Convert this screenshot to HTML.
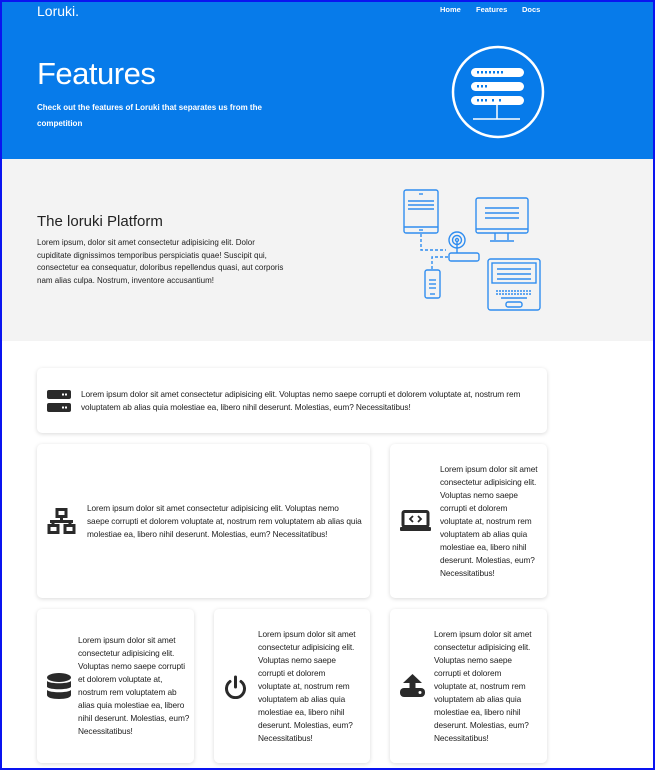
<!DOCTYPE html>
<html><head><meta charset="utf-8"><style>
*{margin:0;padding:0;box-sizing:border-box}
html,body{width:655px;height:770px;overflow:hidden}
body{font-family:"Liberation Sans",sans-serif;background:#fff;position:relative;color:#222}
.frame{position:absolute;inset:0;border:2px solid #0a14f0;pointer-events:none;z-index:10}
.hero{position:absolute;left:0;top:0;width:655px;height:159px;background:#077bea;color:#fff}
.logo{position:absolute;left:37px;top:3px;font-size:14px;font-weight:300}
.nav{position:absolute;top:5px;font-size:7.5px;font-weight:bold}
h1{position:absolute;left:37px;top:56px;font-size:31px;font-weight:300;letter-spacing:-0.5px}
.sub{position:absolute;left:37px;top:100px;font-size:8px;font-weight:bold;line-height:16px;width:252px}
.grey{position:absolute;left:0;top:159px;width:655px;height:182px;background:#f3f3f3}
h2{position:absolute;left:37px;top:213px;font-size:15px;font-weight:300;color:#222}
.ptext{position:absolute;left:37px;top:237px;font-size:8px;line-height:12.5px;width:250px;color:#222}
.card{position:absolute;background:#fff;border-radius:5px;box-shadow:0 1px 4px rgba(0,0,0,.15)}
.t{position:absolute;font-size:8.3px;line-height:13px;color:#222;letter-spacing:-0.1px}
.ic{position:absolute}
</style></head><body>
<div class="hero">
<div class="logo">Loruki.</div>
<div class="nav" style="left:440px">Home</div>
<div class="nav" style="left:476px">Features</div>
<div class="nav" style="left:522px">Docs</div>
<h1>Features</h1>
<div class="sub">Check out the features of Loruki that separates us from the competition</div>
<svg style="position:absolute;left:0;top:0" width="655" height="159" viewBox="0 0 655 159">
<ellipse cx="498" cy="92" rx="45" ry="45" fill="none" stroke="#fff" stroke-width="2.5"/>
<rect x="471" y="68" width="53" height="9" rx="4.5" fill="#fff"/>
<rect x="471" y="82" width="53" height="9" rx="4.5" fill="#fff"/>
<rect x="471" y="96" width="53" height="9" rx="4.5" fill="#fff"/>
<g fill="#077bea">
<rect x="477" y="71" width="2" height="2.5"/><rect x="481" y="71" width="2" height="2.5"/><rect x="485" y="71" width="2" height="2.5"/><rect x="489" y="71" width="2" height="2.5"/><rect x="493" y="71" width="2" height="2.5"/><rect x="497" y="71" width="2" height="2.5"/><rect x="501" y="71" width="2" height="2.5"/>
<rect x="477" y="85" width="2" height="2.5"/><rect x="481" y="85" width="2" height="2.5"/><rect x="485" y="85" width="2" height="2.5"/>
<rect x="477" y="99" width="2" height="2.5"/><rect x="481" y="99" width="2" height="2.5"/><rect x="485" y="99" width="2" height="2.5"/><rect x="492" y="99" width="2" height="2.5"/><rect x="499" y="99" width="2" height="2.5"/>
</g>
<line x1="497" y1="105" x2="497" y2="119" stroke="#fff" stroke-width="1.5"/>
<line x1="473" y1="119" x2="520" y2="119" stroke="#fff" stroke-width="1.5"/>
</svg>
</div>
<div class="grey"></div>
<svg style="position:absolute;left:0;top:0" width="655" height="340" viewBox="0 0 655 340" fill="none" stroke="#2f8df0" stroke-width="1.4">
<rect x="404" y="190" width="34" height="43" rx="2"/><line x1="404" y1="227" x2="438" y2="227"/><line x1="408" y1="201" x2="434" y2="201"/><line x1="408" y1="205" x2="434" y2="205"/><line x1="408" y1="209" x2="434" y2="209"/><line x1="419" y1="230" x2="423" y2="230"/><line x1="419" y1="194" x2="423" y2="194"/>
<path d="M421 234v16h25" stroke-dasharray="3 2"/><path d="M448 257h-16v12" stroke-dasharray="3 2"/>
<circle cx="457" cy="240" r="8"/><circle cx="457" cy="240" r="4.5"/><circle cx="457" cy="240" r="1.5"/><line x1="457" y1="242" x2="457" y2="253"/>
<rect x="449" y="253" width="30" height="8" rx="2"/>
<rect x="476" y="198" width="52" height="35" rx="2"/><line x1="476" y1="229" x2="528" y2="229"/><line x1="485" y1="208" x2="519" y2="208"/><line x1="485" y1="213" x2="519" y2="213"/><line x1="485" y1="218" x2="519" y2="218"/><line x1="495" y1="233" x2="495" y2="240"/><line x1="508" y1="233" x2="508" y2="240"/><line x1="490" y1="241" x2="514" y2="241"/>
<rect x="425" y="270" width="15" height="28" rx="2"/><line x1="429" y1="280" x2="436" y2="280"/><line x1="429" y1="284" x2="436" y2="284"/><line x1="429" y1="288" x2="436" y2="288"/><line x1="430" y1="294" x2="435" y2="294"/>
<rect x="488" y="259" width="52" height="51" rx="2.5"/><rect x="492" y="263" width="44" height="20"/><line x1="497" y1="269" x2="531" y2="269"/><line x1="497" y1="274" x2="531" y2="274"/><line x1="497" y1="279" x2="531" y2="279"/>
<line x1="496" y1="291" x2="532" y2="291" stroke-dasharray="2 1"/><line x1="496" y1="294" x2="532" y2="294" stroke-dasharray="2 1"/><line x1="501" y1="298" x2="527" y2="298"/><rect x="506" y="302" width="16" height="5" rx="2"/>
</svg>
<h2>The loruki Platform</h2>
<div class="ptext">Lorem ipsum, dolor sit amet consectetur adipisicing elit. Dolor cupiditate dignissimos temporibus perspiciatis quae! Suscipit qui, consectetur ea consequatur, doloribus repellendus quasi, aut corporis nam alias culpa. Nostrum, inventore accusantium!</div>

<div class="card" style="left:37px;top:368px;width:510px;height:65px"></div>
<svg class="ic" style="left:47px;top:390px" width="25" height="23" viewBox="0 0 25 23"><rect x="0" y="0" width="24" height="9" rx="2" fill="#2a2a2a"/><rect x="0" y="13" width="24" height="9" rx="2" fill="#2a2a2a"/><g fill="#fff"><rect x="15" y="3.5" width="2" height="2"/><rect x="18" y="3.5" width="2" height="2"/><rect x="15" y="16.5" width="2" height="2"/><rect x="18" y="16.5" width="2" height="2"/></g></svg>
<div class="t" style="left:81px;top:388px;width:440px">Lorem ipsum dolor sit amet consectetur adipisicing elit. Voluptas nemo saepe corrupti et dolorem voluptate at, nostrum rem voluptatem ab alias quia molestiae ea, libero nihil deserunt. Molestias, eum? Necessitatibus!</div>

<div class="card" style="left:37px;top:444px;width:333px;height:154px"></div>
<svg class="ic" style="left:47px;top:508px" width="30" height="26" viewBox="0 0 30 26" fill="none" stroke="#2a2a2a" stroke-width="3"><rect x="10" y="1.5" width="9" height="7"/><path d="M14.5 8.5v5M3 13.5h23M6 13.5v4M23 13.5v4"/><rect x="2" y="17.5" width="9" height="7"/><rect x="18" y="17.5" width="9" height="7"/></svg>
<div class="t" style="left:87px;top:502px;width:275px">Lorem ipsum dolor sit amet consectetur adipisicing elit. Voluptas nemo saepe corrupti et dolorem voluptate at, nostrum rem voluptatem ab alias quia molestiae ea, libero nihil deserunt. Molestias, eum? Necessitatibus!</div>

<div class="card" style="left:390px;top:444px;width:157px;height:154px"></div>
<svg class="ic" style="left:400px;top:510px" width="31" height="22" viewBox="0 0 31 22"><rect x="3" y="1.5" width="25" height="15" rx="1.5" fill="none" stroke="#2a2a2a" stroke-width="3"/><rect x="0" y="17" width="31" height="4" rx="1" fill="#2a2a2a"/><path d="M13 6l-3 3 3 3M18 6l3 3-3 3" fill="none" stroke="#2a2a2a" stroke-width="1.8"/></svg>
<div class="t" style="left:440px;top:463px;width:99px">Lorem ipsum dolor sit amet consectetur adipisicing elit. Voluptas nemo saepe corrupti et dolorem voluptate at, nostrum rem voluptatem ab alias quia molestiae ea, libero nihil deserunt. Molestias, eum? Necessitatibus!</div>

<div class="card" style="left:37px;top:609px;width:157px;height:154px"></div>
<svg class="ic" style="left:47px;top:673px" width="24" height="26" viewBox="0 0 24 26" fill="#2a2a2a"><ellipse cx="12" cy="4.5" rx="12" ry="4.5"/><path d="M0 8c3 3 21 3 24 0v6c-3 3-21 3-24 0z"/><path d="M0 17c3 3 21 3 24 0v5c0 2.5-5 4-12 4S0 24.5 0 22z"/></svg>
<div class="t" style="left:78px;top:634px;width:112px">Lorem ipsum dolor sit amet consectetur adipisicing elit. Voluptas nemo saepe corrupti et dolorem voluptate at, nostrum rem voluptatem ab alias quia molestiae ea, libero nihil deserunt. Molestias, eum? Necessitatibus!</div>

<div class="card" style="left:214px;top:609px;width:156px;height:154px"></div>
<svg class="ic" style="left:224px;top:675px" width="23" height="24" viewBox="0 0 23 24" fill="none" stroke="#2a2a2a" stroke-width="3" stroke-linecap="round"><path d="M11.5 2v10"/><path d="M6 6.5a9 9 0 1 0 11 0"/></svg>
<div class="t" style="left:258px;top:628px;width:99px">Lorem ipsum dolor sit amet consectetur adipisicing elit. Voluptas nemo saepe corrupti et dolorem voluptate at, nostrum rem voluptatem ab alias quia molestiae ea, libero nihil deserunt. Molestias, eum? Necessitatibus!</div>

<div class="card" style="left:390px;top:609px;width:157px;height:154px"></div>
<svg class="ic" style="left:400px;top:674px" width="25" height="24" viewBox="0 0 25 24" fill="#2a2a2a"><path d="M12.5 0L3 9h6.5v8h6V9H22z"/><rect x="0" y="14" width="25" height="9" rx="4"/><circle cx="20" cy="18.5" r="1.5" fill="#fff"/></svg>
<div class="t" style="left:434px;top:628px;width:99px">Lorem ipsum dolor sit amet consectetur adipisicing elit. Voluptas nemo saepe corrupti et dolorem voluptate at, nostrum rem voluptatem ab alias quia molestiae ea, libero nihil deserunt. Molestias, eum? Necessitatibus!</div>

<div class="frame"></div>
</body></html>
